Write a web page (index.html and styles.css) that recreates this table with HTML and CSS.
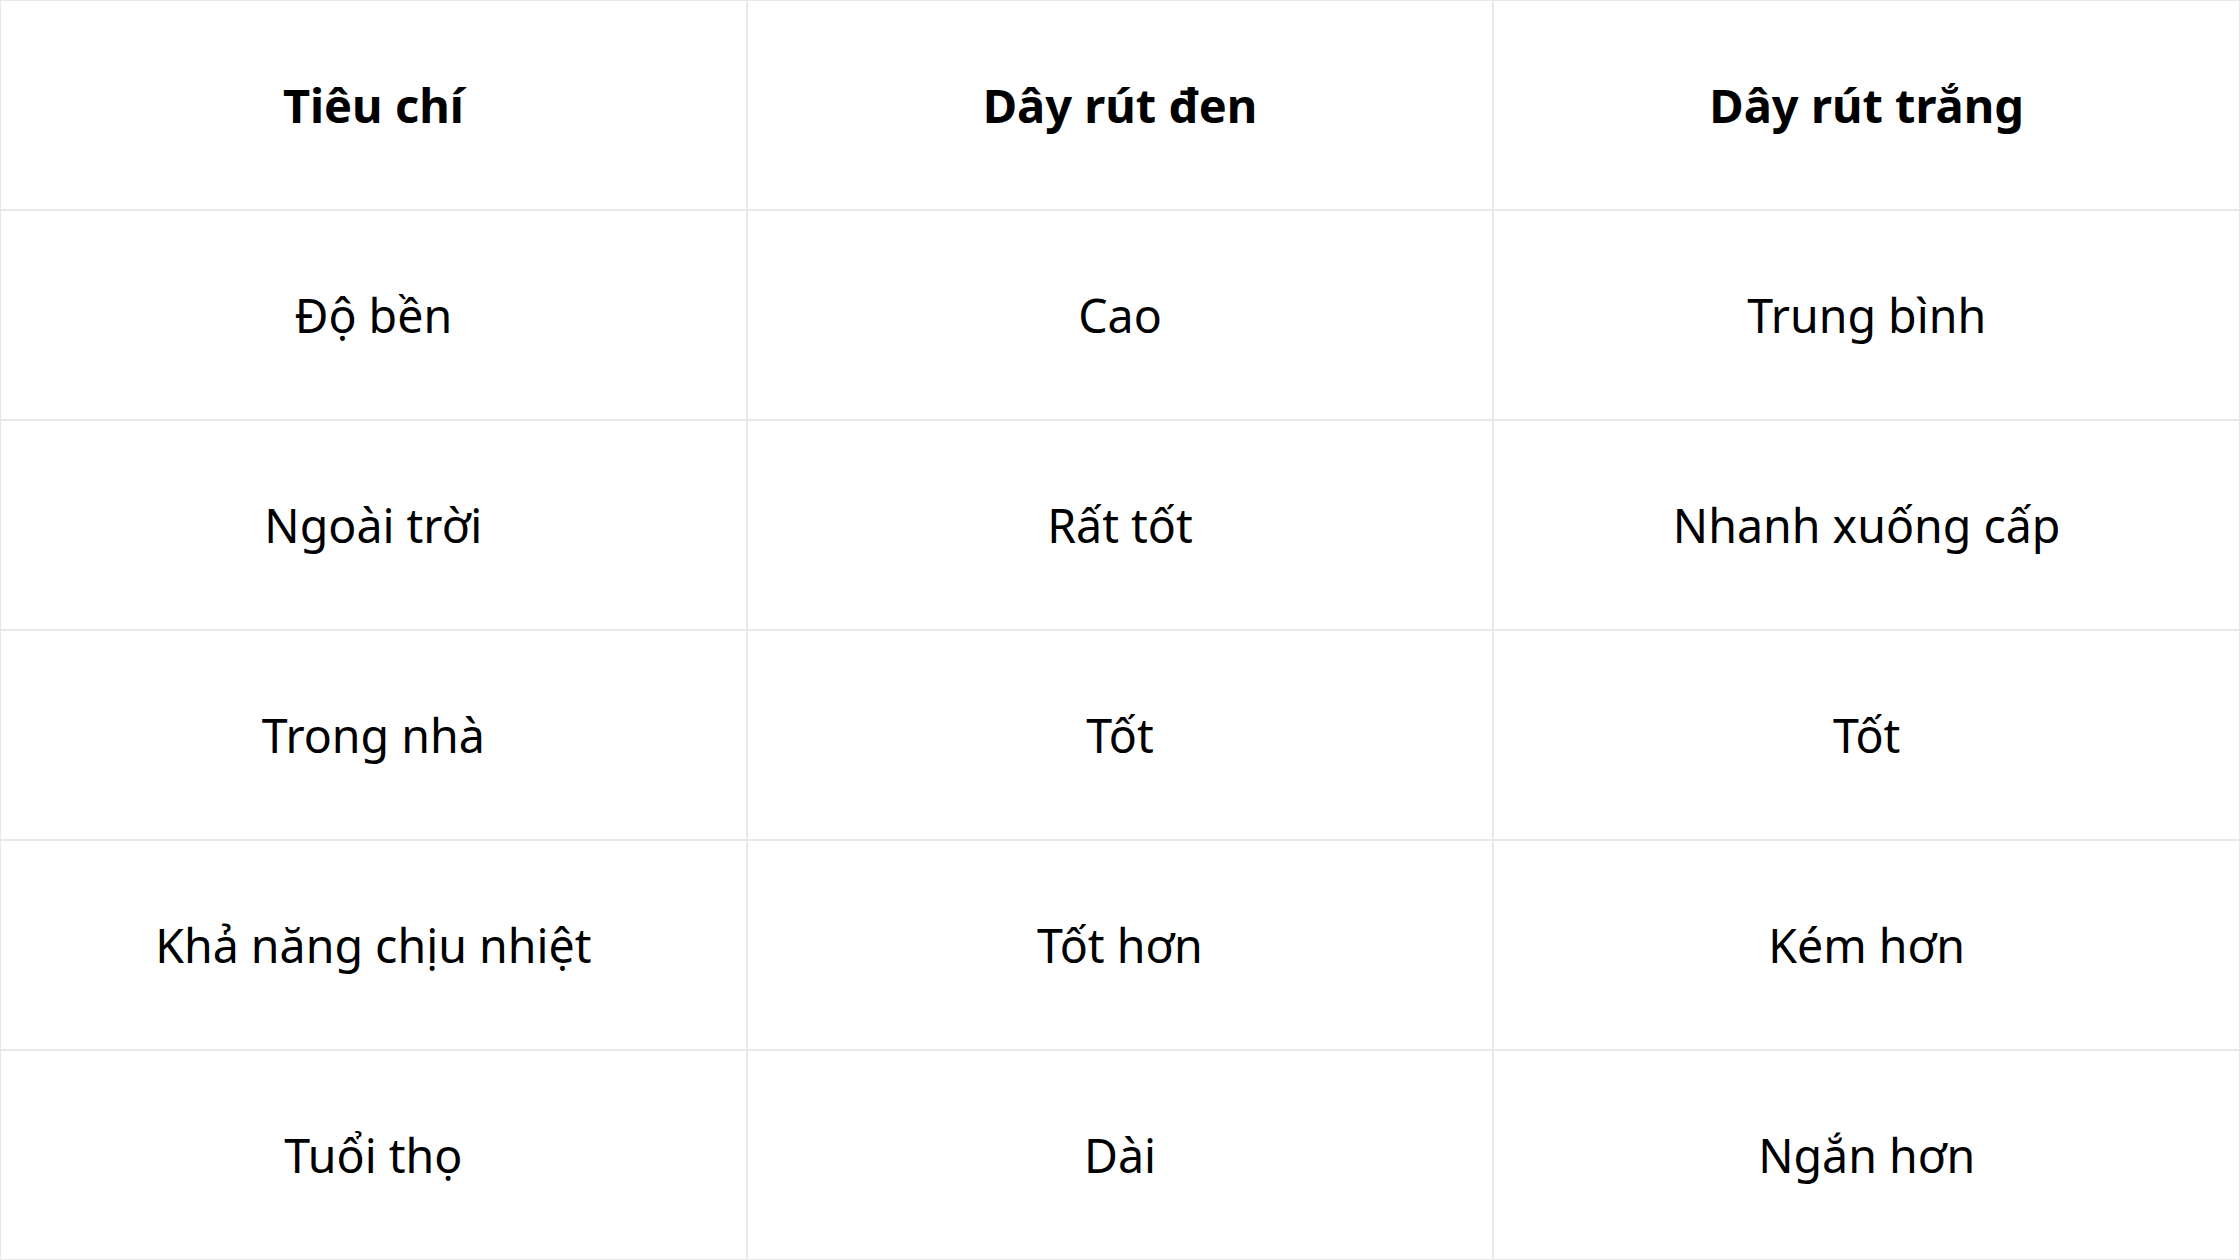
FILE: index.html
```html
<!DOCTYPE html>
<html lang="vi">
<head>
<meta charset="utf-8">
<link rel="stylesheet" href="styles.css">
</head>
<body>
<table class="cmp">
  <thead>
    <tr><th>Tiêu chí</th><th>Dây rút đen</th><th>Dây rút trắng</th></tr>
  </thead>
  <tbody>
    <tr><td>Độ bền</td><td>Cao</td><td>Trung bình</td></tr>
    <tr><td>Ngoài trời</td><td>Rất tốt</td><td>Nhanh xuống cấp</td></tr>
    <tr><td>Trong nhà</td><td>Tốt</td><td>Tốt</td></tr>
    <tr><td>Khả năng chịu nhiệt</td><td>Tốt hơn</td><td>Kém hơn</td></tr>
    <tr><td>Tuổi thọ</td><td>Dài</td><td>Ngắn hơn</td></tr>
  </tbody>
</table>
</body>
</html>
```
FILE: styles.css
```css
html, body {
  margin: 0;
  padding: 0;
  background: #ffffff;
}
body {
  font-family: "Noto Sans", "Open Sans", sans-serif;
  color: #000000;
}
.cmp {
  width: 2240px;
  height: 1260px;
  border-collapse: separate;
  border-spacing: 0;
  table-layout: fixed;
}
.cmp th, .cmp td {
  height: 208px;
  border: 1px solid #e8e8e8;
  text-align: center;
  vertical-align: middle;
  padding: 0;
}
.cmp th {
  font-weight: 700;
  font-size: 47px;
}
.cmp td {
  font-weight: 400;
  font-size: 46.5px;
}
```
